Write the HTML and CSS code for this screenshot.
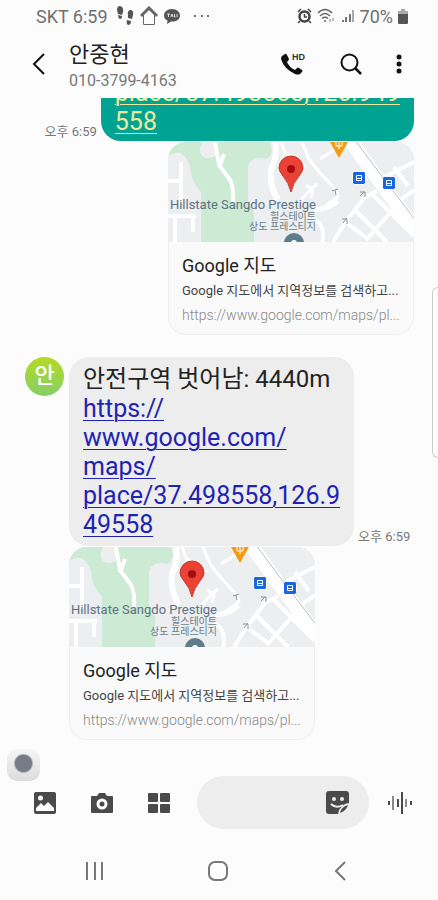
FILE: index.html
```html
<!DOCTYPE html>
<html lang="ko">
<head>
    <meta charset="UTF-8">
    <meta name="viewport" content="width=device-width, initial-scale=1.0">
    <title>안중현</title>
    <link rel="stylesheet" href="styles.css">
</head>
<body>
    <!-- 공용 지도 이미지 -->
    <svg class="defs" aria-hidden="true">
        <symbol id="map" viewBox="0 0 246 100">
            <rect width="246" height="100" fill="#eceef0"/>
            <path fill="#cdead5" d="M0 0H102Q106 12 99 17Q84 13 80 24V58L86 70V100H33V50Q22 38 22 24Q16 8 6 11L0 14Z"/>
            <path fill="#eceef0" d="M34 0Q29 10 35 15Q42 18 48 13L47 0Z"/>
            <g fill="none" stroke="#fff" stroke-width="4" stroke-linejoin="round">
                <path d="M13 20V62M0 39H14M0 74H28M25 74V90M7 74V100"/>
                <path d="M47 0L51 23L62 38Q66 45 65 60M51 26L56 12"/>
                <path d="M107 0Q110 14 103 27Q101 44 110 58" stroke-width="6"/>
                <path d="M113 0L117 11L126 17L138 25M134 0L141 17L152 31L168 48L170 55L156 65L146 68M152 17L168 7M133 58L143 47L149 42M138 43L145 48L143 56" stroke-width="3"/>
                <path d="M146 68Q162 68 170 59M145 76Q158 82 154 100M165 100L177 81L196 56L209 49M188 69L219 100M204 52L246 94M180 82L199 96M198 98L235 56L246 48M216 35L246 20M226 25L240 44"/>
                <path d="M179 -6L207 33L250 91" stroke-width="14"/>
            </g>
            <g fill="none" stroke="#b9bec4">
                <path d="M187 -2L213 33L248 79" stroke-width="1"/>
            </g>
            <g fill="none" stroke="#8d949b">
                <path d="M167 48L168 53M164 49L170 47M192 54L196 50M192 50H197V55M175 81L179 76M174 77H179V82"/>
            </g>
            <path fill="#f39c12" d="M162 0H180L171 16Z"/>
            <path fill="none" stroke="#fff" d="M168 0V4H174V0M171 0V7"/>
            <g fill="#1967e0" stroke="#fff">
                <rect x="184.500" y="29.500" width="13" height="13" rx="2"/>
                <rect x="214.500" y="34.500" width="13" height="13" rx="2"/>
            </g>
            <g fill="none" stroke="#fff">
                <path d="M188.500 33.500h5v5h-5zM188 36.500h6M218.500 38.500h5v5h-5zM218 41.500h6"/>
            </g>
            <g class="map-label">
                <text class="map-name" x="148" y="67" text-anchor="end">Hillstate Sangdo Prestige</text>
                <text x="148" y="78" text-anchor="end">힐스테이트</text>
                <text x="148" y="88" text-anchor="end">상도 프레스티지</text>
            </g>
            <circle cx="126" cy="101" r="10" fill="#5f7c8a"/>
            <circle cx="126" cy="101" r="3" fill="#fff"/>
            <path fill="#ea4335" stroke="#c5382c" d="M123 50Q121 41 115 34Q111 29 111 26A12 12 0 0 1 135 26Q135 29 131 34Q125 41 123 50Z"/>
            <circle cx="123" cy="27" r="4" fill="#a50e0e"/>
        </symbol>
    </svg>

    <div class="status-bar">
        <span class="carrier">SKT 6:59</span>
        <svg width="19" height="20" viewBox="0 0 19 20" fill="#555">
            <path d="M1 4Q1 0 4 0Q8 1 7 6L6 9L2 8Z"/>
            <path d="M2 9L6 10Q6 13 4 13Q2 12 2 9Z"/>
            <path d="M12 9Q11 5 14 4Q18 4 17 9L16 13L12 12Z"/>
            <path d="M11 14L15 15Q15 19 12 19Q10 18 11 14Z"/>
        </svg>
        <svg width="18" height="20" viewBox="0 0 18 20" fill="none" stroke="#666">
            <path d="M1 10L9 2L17 10" stroke-width="3"/>
            <path d="M3.500 9V18.500H14.500V9"/>
        </svg>
        <svg width="18" height="18" viewBox="0 0 18 18">
            <path fill="#555" d="M9 2C4 2 1 5 1 8.500Q1 12 4.500 13.500L4 17L8 14.500C14 15 17 12 17 8.500C17 5 14 2 9 2Z"/>
            <path stroke="#ddd" fill="none" d="M4 7H7M5.500 7V10M8 10L9 7L10 10M11.500 7V10H12.500M14 7V10"/>
        </svg>
        <svg class="more-dots" width="18" height="6" viewBox="0 0 18 6" fill="#444">
            <circle cx="2" cy="3" r="1"/><circle cx="9" cy="3" r="1"/><circle cx="15" cy="3" r="1"/>
        </svg>
        <div class="status-right">
            <svg width="15" height="16" viewBox="0 0 15 16" fill="none" stroke="#444">
                <circle cx="7.500" cy="8.500" r="5" stroke-width="2.500"/>
                <path d="M1 4L4 1M14 4L11 1M3 13L1 15M12 13L14 15M7.500 6V9H10" stroke-width="1.500"/>
            </svg>
            <svg width="19" height="16" viewBox="0 0 19 16" fill="none" stroke="#666" stroke-width="1.500">
                <path d="M1 5Q8 -2 15 5M3 8Q8 3 13 8M5 10.500Q8 8 11 10.500"/>
                <circle cx="8" cy="13" r="1" fill="#666" stroke="none"/>
                <path d="M13 11V14M16 10V13" stroke="#aaa"/>
            </svg>
            <svg width="14" height="14" viewBox="0 0 14 14" fill="none" stroke="#777" stroke-width="2">
                <path d="M2 13V11M5 13V8M9 13V5"/>
                <path d="M12 13V1" stroke="#aaa"/>
            </svg>
            <span>70%</span>
            <svg width="10" height="15" viewBox="0 0 10 15">
                <path fill="#aaa" d="M3 0H7V2H10V6H0V2H3Z"/>
                <path fill="#555" d="M0 5H10V14Q10 15 9 15H1Q0 15 0 14Z"/>
            </svg>
        </div>
    </div>

    <header class="header">
        <button type="button" class="icon-btn" aria-label="뒤로">
            <svg width="14" height="22" viewBox="0 0 14 22" fill="none" stroke="#111" stroke-width="2"><path d="M12 1L2 11L12 21"/></svg>
        </button>
        <div class="contact">
            <h1>안중현</h1>
            <p>010-3799-4163</p>
        </div>
        <div class="header-actions">
            <button type="button" class="icon-btn" aria-label="HD 통화">
                <svg width="26" height="24" viewBox="0 0 26 24">
                    <path fill="#111" d="M2 4L5 2Q6 1 7 3L9 7Q9 8 7 10Q9 15 15 18L17 16Q18 15 19 16L22 18Q23 19 22 20L20 22Q18 23 15 22Q4 17 1 7Q1 5 2 4Z"/>
                    <text class="hd" x="12" y="8">HD</text>
                </svg>
            </button>
            <button type="button" class="icon-btn" aria-label="검색">
                <svg width="24" height="24" viewBox="0 0 24 24" fill="none" stroke="#111" stroke-width="2"><circle cx="10.500" cy="10.500" r="8"/><path d="M16 16L22 22" stroke-width="2.500"/></svg>
            </button>
            <button type="button" class="icon-btn" aria-label="더보기">
                <svg width="6" height="22" viewBox="0 0 6 22" fill="#111"><circle cx="3" cy="4" r="2.500"/><circle cx="3" cy="11" r="2.500"/><circle cx="3" cy="18" r="2.500"/></svg>
            </button>
        </div>
    </header>

    <main class="chat">
        <section class="message sent">
            <div class="bubble-row">
                <time>오후 6:59</time>
                <div class="bubble">
                    <a href="#">place/37.498558,126.949<br>558</a>
                </div>
            </div>
            <article class="card">
                <svg class="card-map" viewBox="0 0 246 100"><use href="#map"/></svg>
                <div class="card-body">
                    <h2>Google 지도</h2>
                    <p class="card-desc">Google 지도에서 지역정보를 검색하고...</p>
                    <p class="card-url">https://www.google.com/maps/pl...</p>
                </div>
            </article>
        </section>

        <section class="message received">
            <div class="avatar">안</div>
            <div class="message-content">
                <div class="bubble-row">
                    <div class="bubble">
                        <p>안전구역 벗어남: 4440m</p>
                        <a href="#">https://<br>www.google.com/<br>maps/<br>place/37.498558,126.9<br>49558</a>
                    </div>
                    <time>오후 6:59</time>
                </div>
                <article class="card">
                    <svg class="card-map" viewBox="0 0 246 100"><use href="#map"/></svg>
                    <div class="card-body">
                        <h2>Google 지도</h2>
                        <p class="card-desc">Google 지도에서 지역정보를 검색하고...</p>
                        <p class="card-url">https://www.google.com/maps/pl...</p>
                    </div>
                </article>
            </div>
        </section>
    </main>

    <form class="composer">
        <button type="button" class="icon-btn" aria-label="갤러리">
            <svg width="22" height="22" viewBox="0 0 22 22">
                <rect width="22" height="22" rx="2" fill="#4a4a4a"/>
                <circle cx="6.500" cy="6" r="2.500" fill="#fcfcfc"/>
                <path fill="#fcfcfc" d="M2 19V16L7 11L10 14L14 10L20 16V19Z"/>
            </svg>
        </button>
        <button type="button" class="icon-btn" aria-label="카메라">
            <svg width="22" height="22" viewBox="0 0 22 22">
                <path fill="#4a4a4a" d="M1 4H6L8 1H14L16 4H21Q22 4 22 5V20Q22 21 21 21H1Q0 21 0 20V5Q0 4 1 4Z"/>
                <circle cx="11" cy="12" r="4" fill="none" stroke="#fcfcfc" stroke-width="3"/>
            </svg>
        </button>
        <button type="button" class="icon-btn" aria-label="더 많은 기능">
            <svg width="22" height="22" viewBox="0 0 22 22" fill="#4a4a4a">
                <rect x="0" y="1" width="10" height="9" rx="1"/><rect x="12" y="1" width="10" height="9" rx="1"/>
                <rect x="0" y="12" width="10" height="9" rx="1"/><rect x="12" y="12" width="10" height="9" rx="1"/>
            </svg>
        </button>
        <div class="input-box">
            <input type="text" aria-label="메시지 입력">
            <button type="button" class="icon-btn" aria-label="스티커">
                <svg width="23" height="23" viewBox="0 0 23 23">
                    <path fill="#4a4a4a" d="M3 0H20Q23 0 23 3V12Q14 13 12 23H3Q0 23 0 20V3Q0 0 3 0Z"/>
                    <path fill="#4a4a4a" d="M14 22Q15 16 22 14Q20 20 14 22Z"/>
                    <g fill="#ededed"><circle cx="8" cy="8" r="2"/><circle cx="16" cy="8" r="2"/></g>
                    <path fill="none" stroke="#ededed" stroke-width="2" d="M5 13Q10 18 17 14"/>
                </svg>
            </button>
        </div>
        <button type="button" class="icon-btn voice" aria-label="음성 입력">
            <svg width="24" height="22" viewBox="0 0 24 22" fill="none" stroke="#4a4a4a" stroke-width="2">
                <path d="M1 9V13M10 7V15M14 0V22M23 9V13"/>
                <path d="M5 4V18M18 7V15" stroke="#888"/>
            </svg>
        </button>
        <span class="floating-widget"></span>
    </form>

    <nav class="nav-bar">
        <button type="button" class="icon-btn" aria-label="최근 앱">
            <svg width="20" height="20" viewBox="0 0 20 20" fill="none" stroke="#777" stroke-width="2"><path d="M2 1V19M10 1V19M17 1V19"/></svg>
        </button>
        <button type="button" class="icon-btn" aria-label="홈">
            <svg width="20" height="20" viewBox="0 0 20 20" fill="none" stroke="#777" stroke-width="2"><rect x="1" y="1" width="18" height="18" rx="6"/></svg>
        </button>
        <button type="button" class="icon-btn" aria-label="이전">
            <svg width="20" height="20" viewBox="0 0 20 20" fill="none" stroke="#777" stroke-width="2"><path d="M14 1L5 10L14 19"/></svg>
        </button>
    </nav>

    <div class="edge-panel"></div>
</body>
</html>
```

FILE: styles.css
```css
* {
    margin: 0;
    padding: 0;
    box-sizing: border-box;
}

body {
    position: relative;
    font-family: Roboto, 'Noto Sans CJK KR', sans-serif;
    background: #fcfcfc;
    color: #222;
    height: 100vh;
    display: flex;
    flex-direction: column;
    overflow: hidden;
}

svg {
    display: block;
    flex-shrink: 0;
}

.defs {
    position: absolute;
    width: 0;
    height: 0;
}

.icon-btn {
    border: none;
    background: none;
    cursor: pointer;
    display: flex;
    align-items: center;
    justify-content: center;
}

/* 상태 표시줄 */
.status-bar {
    display: flex;
    align-items: center;
    gap: 5px;
    height: 32px;
    padding: 0 30px 0 36px;
    font-size: 18px;
    color: #707070;
}

.carrier {
    margin-right: 3px;
}

.more-dots {
    margin-left: 7px;
}

.status-right {
    display: flex;
    align-items: center;
    gap: 5px;
    margin-left: auto;
}

/* 상단 헤더 */
.header {
    display: flex;
    align-items: center;
    height: 66px;
    flex-shrink: 0;
    padding: 0 36px 2px 32px;
}

.contact {
    margin-left: 23px;
    padding-top: 4px;
}

.contact h1 {
    font-size: 22px;
    font-weight: 400;
    line-height: 30px;
}

.contact p {
    font-size: 16px;
    line-height: 22px;
    color: #777;
}

.header-actions {
    display: flex;
    align-items: center;
    gap: 33px;
    margin-left: auto;
}

.hd {
    font-size: 9px;
    font-weight: 700;
    fill: #333;
}

/* 대화 내용 */
.chat {
    flex: 1;
    min-height: 0;
    overflow: hidden;
    display: flex;
    flex-direction: column;
    justify-content: flex-end;
    gap: 22px;
    padding: 0 24px 22px 25px;
}

.message {
    display: flex;
}

.sent {
    flex-direction: column;
    align-items: flex-end;
    gap: 1px;
}

.received {
    gap: 5px;
}

.message-content {
    display: flex;
    flex-direction: column;
    align-items: flex-start;
    gap: 1px;
}

.bubble-row {
    display: flex;
    align-items: flex-end;
    gap: 4px;
}

.bubble {
    padding: 8px 14px 7px;
    border-radius: 20px;
    background: #ededed;
    font-size: 24px;
    line-height: 29px;
}

.bubble a {
    display: block;
    font-size: 25px;
    color: #1f23b4;
    text-decoration-thickness: 1px;
    text-underline-offset: 3px;
}

.sent .bubble {
    background: #00a392;
    padding-bottom: 5px;
}

.sent .bubble a {
    color: #efe9a0;
}

time {
    font-size: 13px;
    line-height: 18px;
    color: #777;
    white-space: nowrap;
}

.avatar {
    width: 39px;
    height: 39px;
    flex-shrink: 0;
    border-radius: 50%;
    background: linear-gradient(#b6d924, #84cf68);
    color: white;
    font-size: 22px;
    font-weight: 500;
    line-height: 37px;
    text-align: center;
}

.card {
    width: 246px;
    border-radius: 18px;
    background: #fafafa;
    box-shadow: inset 0 0 0 1px #f0f0f0;
    overflow: hidden;
}

.card-map {
    width: 100%;
    height: auto;
}

.map-label {
    font-size: 10px;
    fill: #6b7c8a;
}

.map-name {
    font-size: 13px;
    fill: #5f7180;
}

.card-body {
    padding: 10px 14px 8px;
    white-space: nowrap;
}

.card h2 {
    font-size: 18px;
    font-weight: 400;
    line-height: 27px;
}

.card-desc {
    font-size: 13px;
    line-height: 24px;
    color: #444;
}

.card-url {
    font-size: 14px;
    font-weight: 300;
    line-height: 24px;
    color: #888;
}

/* 입력 영역 */
.composer {
    position: relative;
    display: flex;
    align-items: center;
    gap: 35px;
    padding: 14px 26px 0 34px;
}

.input-box {
    flex: 1;
    min-width: 0;
    display: flex;
    align-items: center;
    height: 53px;
    margin: 0 -16px 0 -8px;
    padding: 0 20px;
    border-radius: 27px;
    background: #ededed;
}

.input-box input {
    flex: 1;
    min-width: 0;
    height: 100%;
    border: none;
    outline: none;
    background: transparent;
    font-size: 18px;
}

.floating-widget {
    position: absolute;
    left: 7px;
    top: -13px;
    width: 33px;
    height: 32px;
    border-radius: 10px;
    background: radial-gradient(circle at 50% 45%, #777b85 8px, transparent 10px), linear-gradient(#f6f6f6, #dcdcdc);
}

/* 하단 내비게이션 */
.nav-bar {
    display: flex;
    height: 71px;
    flex-shrink: 0;
    padding: 13px 36px 0 34px;
}

.nav-bar .icon-btn {
    flex: 1;
}

.edge-panel {
    position: absolute;
    right: 0;
    top: 287px;
    width: 6px;
    height: 171px;
    border: 1px solid #ccc;
    border-right: none;
    border-radius: 8px 0 0 8px;
    background: #fff;
}
```
